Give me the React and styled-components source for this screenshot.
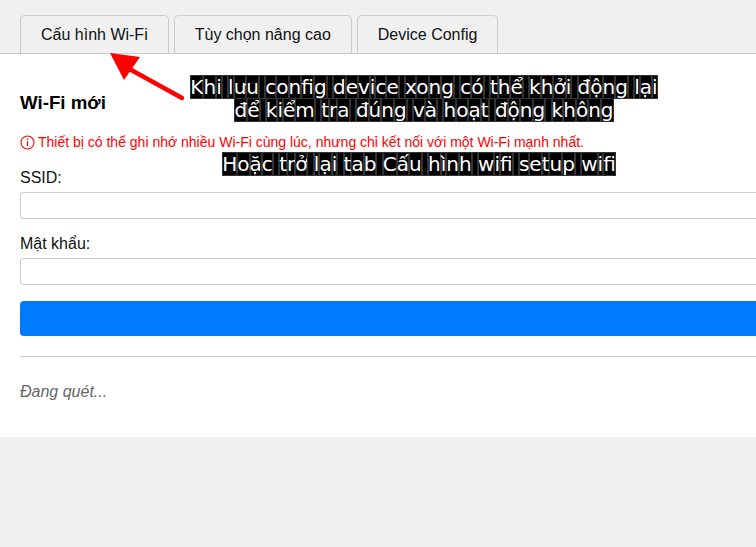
import React from "react";
import styled, { createGlobalStyle } from "styled-components";

const Global = createGlobalStyle`
  html, body { margin: 0; padding: 0; overflow: hidden; background: #f0f0f0; }
  body { font-family: "Liberation Sans", Arial, sans-serif; color: #222; }
`;

const Page = styled.div`
  position: relative;
  width: 820px;
  min-height: 547px;
  background: #f0f0f0;
`;

const TabBar = styled.div`
  display: flex;
  gap: 5px;
  padding: 15px 0 0 20px;
  border-bottom: 1px solid #ccc;
  height: 38px;
  box-sizing: content-box;
  align-items: flex-end;
`;

const Tab = styled.button`
  font-family: "Liberation Sans", Arial, sans-serif;
  font-size: 16px;
  line-height: 18px;
  color: #111;
  background: #f0f0f0;
  border: 1px solid #ccc;
  border-bottom: none;
  border-radius: 5px 5px 0 0;
  padding: 10px 20px 9px;
  height: 38px;
  margin: 0;
  cursor: pointer;
`;

const Panel = styled.div`
  background: #fff;
  padding: 20px 20px 36px;
`;

const Title = styled.h3`
  font-size: 18.72px;
  font-weight: bold;
  margin: 18px 0 0;
  line-height: 22px;
  color: #000;
`;

const Warning = styled.p`
  display: flex;
  align-items: center;
  gap: 3px;
  margin: 20px 0 0;
  font-size: 14px;
  line-height: 16px;
  color: #ff0000;
`;

const Label = styled.label`
  display: block;
  font-size: 16px;
  line-height: 18px;
  margin-top: ${(p) => p.$mt}px;
  color: #111;
`;

const Input = styled.input`
  display: block;
  box-sizing: border-box;
  width: 100%;
  height: 27px;
  margin-top: 5px;
  border: 1px solid #ccc;
  border-radius: 3px;
  padding: 5px;
  font-size: 13px;
`;

const Submit = styled.button`
  display: block;
  width: 100%;
  height: 35px;
  margin-top: 16px;
  background: #007bff;
  border: none;
  border-radius: 4px;
  color: #fff;
  font-size: 16px;
`;

const Rule = styled.hr`
  border: none;
  border-top: 1px solid #ccc;
  margin: 20px 0 0;
`;

const Scanning = styled.p`
  margin: 26px 0 0;
  font-size: 16px;
  line-height: 18px;
  font-style: italic;
  color: #666;
`;

const Note = styled.div`
  position: absolute;
  top: ${(p) => p.$top}px;
  left: ${(p) => p.$left}px;
  width: ${(p) => p.$width}px;
  text-align: center;
  font-family: "DejaVu Sans", sans-serif;
  font-size: 20px;
  color: #fff;
  white-space: nowrap;
`;

const NoteLine = styled.div`
  line-height: 23px;
`;

const Glyph = styled.span`
  background: #000;
  box-shadow: inset 0 0 0 1px #333;
`;

const ArrowSvg = styled.svg`
  position: absolute;
  left: 0;
  top: 0;
  pointer-events: none;
`;

const Boxed = ({ text }) => (
  <NoteLine>
    {Array.from(text).map((c, i) => (
      <Glyph key={i}>{c}</Glyph>
    ))}
  </NoteLine>
);

const InfoIcon = () => (
  <svg width="15" height="15" viewBox="0 0 15 15" fill="none">
    <circle cx="7.5" cy="7.5" r="6.5" stroke="#ff0000" strokeWidth="1.1" />
    <line x1="7.5" y1="6.2" x2="7.5" y2="11.2" stroke="#ff0000" strokeWidth="1.2" />
    <circle cx="7.5" cy="4.2" r="0.8" fill="#ff0000" />
  </svg>
);

export default function App() {
  return (
    <>
      <Global />
      <Page>
        <TabBar>
          <Tab>Cấu hình Wi-Fi</Tab>
          <Tab>Tùy chọn nâng cao</Tab>
          <Tab>Device Config</Tab>
        </TabBar>
        <Panel>
          <Title>Wi-Fi mới</Title>
          <Warning>
            <InfoIcon />
            Thiết bị có thể ghi nhớ nhiều Wi-Fi cùng lúc, nhưng chỉ kết nối với một Wi-Fi mạnh nhất.
          </Warning>
          <Label $mt={19}>SSID:</Label>
          <Input type="text" />
          <Label $mt={16}>Mật khẩu:</Label>
          <Input type="password" />
          <Submit />
          <Rule />
          <Scanning>Đang quét...</Scanning>
        </Panel>
        <Note $top={76} $left={174} $width={500}>
          <Boxed text="Khi lưu config device xong có thể khởi động lại" />
          <Boxed text="để kiểm tra đúng và hoạt động không" />
        </Note>
        <Note $top={153} $left={169} $width={500}>
          <Boxed text="Hoặc trở lại tab Cấu hình wifi setup wifi" />
        </Note>
        <ArrowSvg width="200" height="110" viewBox="0 0 200 110">
          <line x1="182" y1="98" x2="124" y2="66" stroke="#ff0000" strokeWidth="4.5" strokeLinecap="round" />
          <polygon points="110,53 140,57 124,80" fill="#ff0000" />
        </ArrowSvg>
      </Page>
    </>
  );
}
